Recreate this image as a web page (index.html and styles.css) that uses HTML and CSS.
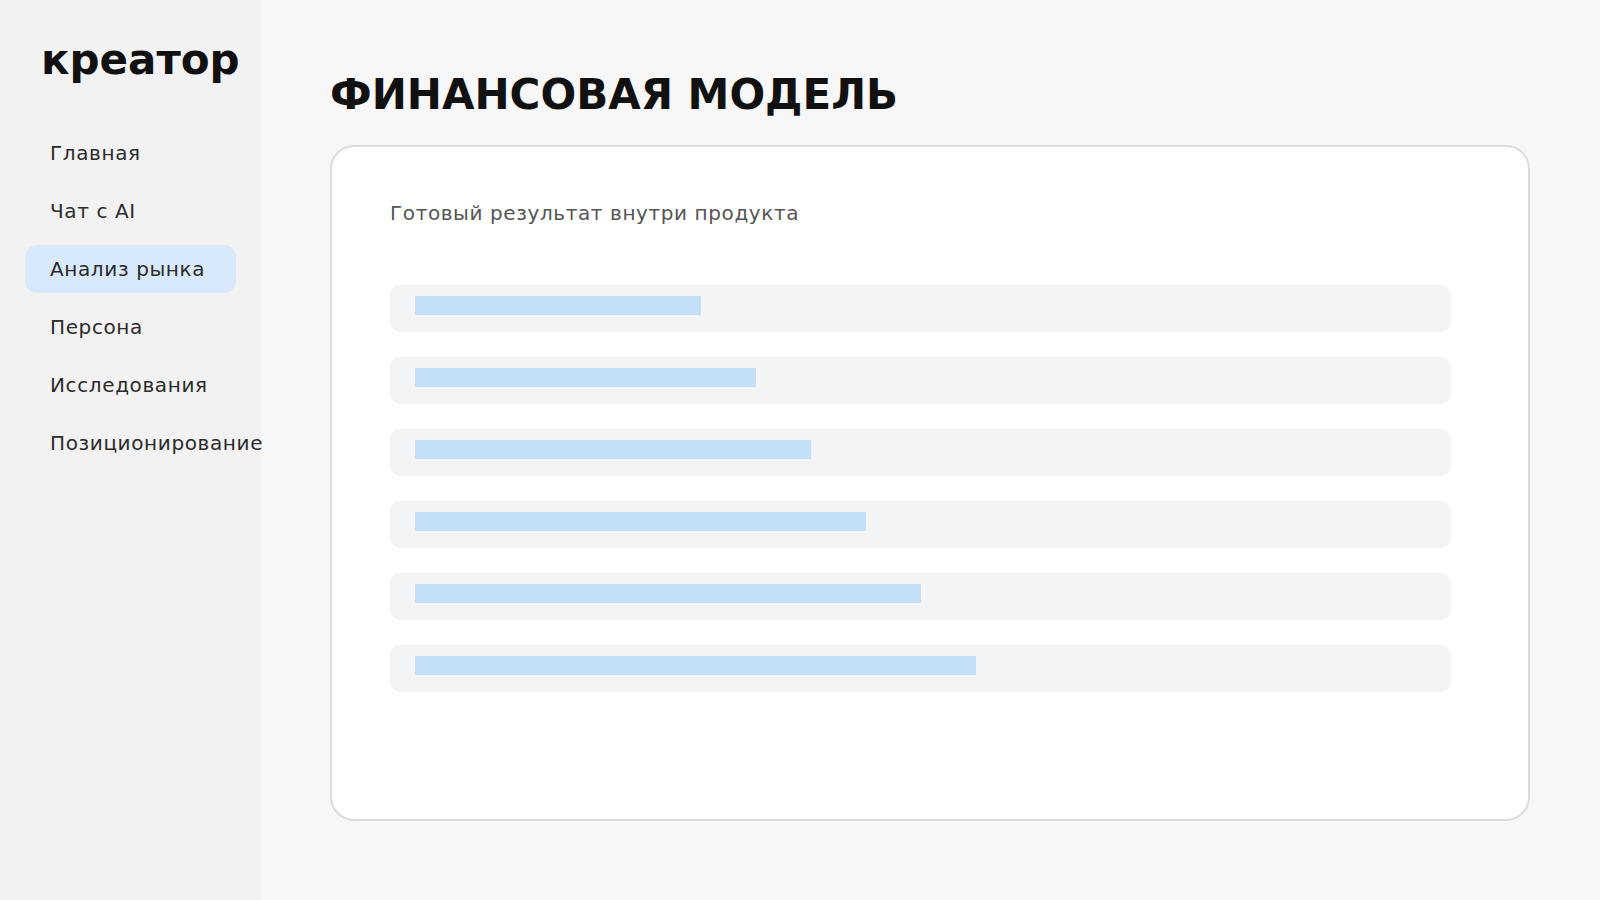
FILE: index.html
```html
<!DOCTYPE html>
<html lang="ru">
<head>
<meta charset="utf-8">
<title>креатор — Финансовая модель</title>
<link rel="stylesheet" href="styles.css">
</head>
<body>
<div class="app">
  <aside class="sidebar">
    <div class="logo">креатор</div>
    <nav class="nav">
      <a class="nav-item">Главная</a>
      <a class="nav-item">Чат с AI</a>
      <a class="nav-item active">Анализ рынка</a>
      <a class="nav-item">Персона</a>
      <a class="nav-item">Исследования</a>
      <a class="nav-item">Позиционирование</a>
    </nav>
  </aside>
  <main class="main">
    <h1 class="title">ФИНАНСОВАЯ МОДЕЛЬ</h1>
    <section class="card">
      <p class="card-caption">Готовый результат внутри продукта</p>
      <div class="rows">
        <div class="row"><div class="bar" style="width:286px"></div></div>
        <div class="row"><div class="bar" style="width:341px"></div></div>
        <div class="row"><div class="bar" style="width:396px"></div></div>
        <div class="row"><div class="bar" style="width:451px"></div></div>
        <div class="row"><div class="bar" style="width:506px"></div></div>
        <div class="row"><div class="bar" style="width:561px"></div></div>
      </div>
    </section>
  </main>
</div>
</body>
</html>
```

FILE: styles.css
```css
* {
  box-sizing: border-box;
}

html, body {
  margin: 0;
  padding: 0;
  height: 100%;
}

body {
  font-family: "DejaVu Sans", "Noto Sans", sans-serif;
  color: #222;
  background: #f7f7f7;
}

.app {
  display: flex;
  height: 900px;
}

/* left navigation column */
.sidebar {
  width: 261px;
  flex: none;
  background: #f2f2f2;
  padding: 34px 25px 0 25px;
}

.logo {
  font-size: 42px;
  font-weight: 700;
  color: #111;
  padding-left: 16px;
  line-height: 52px;
}

.nav {
  display: flex;
  flex-direction: column;
  gap: 10px;
  margin-top: 43px;
}

.nav-item {
  display: flex;
  align-items: center;
  height: 48px;
  padding: 0 25px;
  border-radius: 12px;
  font-size: 20px;
  letter-spacing: 0.62px;
  color: #2b2b2b;
  white-space: nowrap;
}

.nav-item.active {
  background: #d9e9fc;
  width: 211px;
}

/* content area */
.main {
  flex: 1;
  padding: 62px 70px 0 69px;
}

.title {
  margin: 0 0 21px 0;
  padding-top: 4px;
  font-size: 42px;
  font-weight: 700;
  letter-spacing: 0;
  line-height: 58px;
  color: #111;
}

.card {
  height: 676px;
  background: #fff;
  border: 2px solid #dcdcdc;
  border-radius: 24px;
  padding: 53px 57px 0 58px;
}

.card-caption {
  margin: 0;
  font-size: 20px;
  line-height: 26px;
  color: #555;
  letter-spacing: 0.6px;
}

.rows {
  display: flex;
  flex-direction: column;
  gap: 25px;
  margin-top: 59px;
  width: 1061px;
}

.row {
  height: 47px;
  background: #f3f4f6;
  border-radius: 10px;
  padding: 11px 25px;
}

.bar {
  height: 19px;
  background: #c4dff8;
}
```
